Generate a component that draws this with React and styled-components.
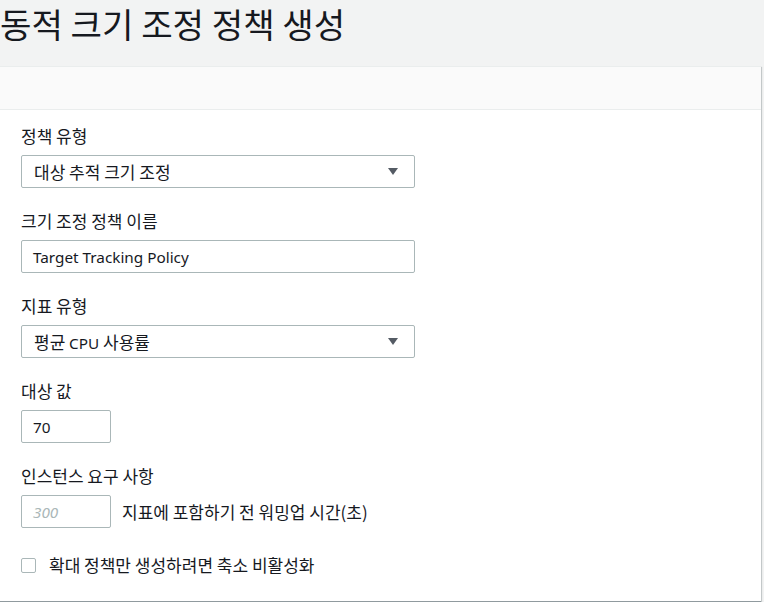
import styled, { createGlobalStyle } from "styled-components";

const GlobalStyle = createGlobalStyle`
    html, body {
        margin: 0;
        padding: 0;
        background-color: #f2f3f3;
        overflow: hidden;
    }
    body {
        font-family: "Noto Sans CJK KR", sans-serif;
        color: #16191f;
    }
`

const Page = styled.div`
    width: 764px;
    height: 602px;
    display: flex;
    flex-direction: column;
`

const Title = styled.h1`
    margin: 0;
    height: 66px;
    font-family: "Noto Sans CJK KR", sans-serif;
    font-size: 34.2px;
    font-weight: 400;
    line-height: 46px;
    color: #16191f;
    white-space: nowrap;
`

const Panel = styled.section`
    margin-left: -2px;
    width: 763px;
    height: 534px;
    background-color: #ffffff;
    border-top: 1px solid #eaeded;
    box-shadow: 0 1px 1px 0 rgba(0, 28, 36, 0.3), 1px 1px 1px 0 rgba(0, 28, 36, 0.15);
    display: flex;
    flex-direction: column;
`

const PanelHeader = styled.div`
    height: 42px;
    background-color: #fafafa;
    border-bottom: 1px solid #eaeded;
`

const PanelBody = styled.div`
    padding: 15px 22px 0 23px;
    display: flex;
    flex-direction: column;
    gap: 22px;
`

const Field = styled.div`
    display: flex;
    flex-direction: column;
`

const Label = styled.label`
    font-size: 17px;
    line-height: 22px;
    height: 22px;
    margin-bottom: 8px;
`

/* Latin runs are set a little smaller than the Hangul, as in the reference font */
const Latin = styled.span`
    font-family: "Noto Sans", sans-serif;
    font-size: 15.3px;
`

const Select = styled.div`
    box-sizing: border-box;
    width: 394px;
    height: 33px;
    border: 1px solid #aab7b8;
    border-radius: 2px;
    background: #ffffff;
    display: flex;
    align-items: center;
    padding: 0 16px 0 12px;
    font-size: 17px;
`

const SelectValue = styled.span`
    flex: 1;
`

const Input = styled.div`
    box-sizing: border-box;
    flex: none;
    width: ${props => props.$width || 394}px;
    height: 33px;
    border: 1px solid #aab7b8;
    border-radius: 2px;
    background: #ffffff;
    display: flex;
    align-items: center;
    padding: 0 11px;
    color: ${props => props.$placeholder ? "#aab7b8" : "#16191f"};
    font-style: ${props => props.$placeholder ? "italic" : "normal"};
`

const InlineRow = styled.div`
    display: flex;
    align-items: center;
    gap: 11px;
    font-size: 17px;
`

const CheckRow = styled.label`
    margin-top: 4px;
    display: flex;
    align-items: center;
    gap: 13px;
    font-size: 17px;
    line-height: 22px;
`

const Checkbox = styled.span`
    box-sizing: border-box;
    width: 15px;
    height: 15px;
    border: 1px solid #aab7b8;
    border-radius: 2px;
    background: #ffffff;
`

function Caret() {
    return (
        <svg width="10" height="7" viewBox="0 0 10 7">
            <path d="M0 0 H10 L5 7 Z" fill="#545b64" />
        </svg>
    )
}

export default function App() {
    return (
        <Page>
            <GlobalStyle />
            <Title>동적 크기 조정 정책 생성</Title>
            <Panel>
                <PanelHeader />
                <PanelBody>
                    <Field>
                        <Label>정책 유형</Label>
                        <Select>
                            <SelectValue>대상 추적 크기 조정</SelectValue>
                            <Caret />
                        </Select>
                    </Field>
                    <Field>
                        <Label>크기 조정 정책 이름</Label>
                        <Input><Latin>Target Tracking Policy</Latin></Input>
                    </Field>
                    <Field>
                        <Label>지표 유형</Label>
                        <Select>
                            <SelectValue>평균 <Latin>CPU</Latin> 사용률</SelectValue>
                            <Caret />
                        </Select>
                    </Field>
                    <Field>
                        <Label>대상 값</Label>
                        <Input $width={90}><Latin>70</Latin></Input>
                    </Field>
                    <Field>
                        <Label>인스턴스 요구 사항</Label>
                        <InlineRow>
                            <Input $width={90} $placeholder><Latin>300</Latin></Input>
                            <span>지표에 포함하기 전 워밍업 시간(초)</span>
                        </InlineRow>
                    </Field>
                    <CheckRow>
                        <Checkbox />
                        <span>확대 정책만 생성하려면 축소 비활성화</span>
                    </CheckRow>
                </PanelBody>
            </Panel>
        </Page>
    )
}
